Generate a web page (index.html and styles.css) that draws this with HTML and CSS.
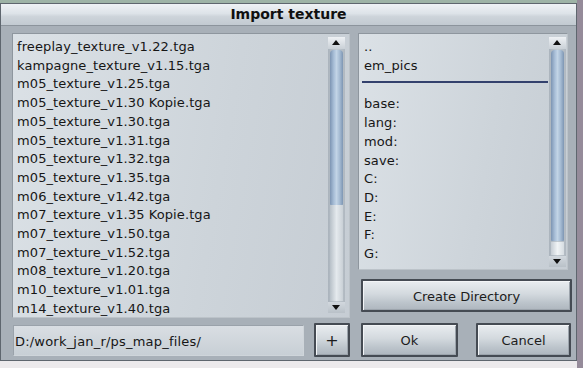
FILE: index.html
```html
<!DOCTYPE html>
<html>
<head>
<meta charset="utf-8">
<title>Import texture</title>
<link rel="stylesheet" href="styles.css">
</head>
<body>
<div class="dialog">
  <div class="titlebar">Import texture</div>
  <div class="content">
    <div class="panel files-panel">
      <ul class="list files">
        <li>freeplay_texture_v1.22.tga</li>
        <li>kampagne_texture_v1.15.tga</li>
        <li>m05_texture_v1.25.tga</li>
        <li>m05_texture_v1.30 Kopie.tga</li>
        <li>m05_texture_v1.30.tga</li>
        <li>m05_texture_v1.31.tga</li>
        <li>m05_texture_v1.32.tga</li>
        <li>m05_texture_v1.35.tga</li>
        <li>m06_texture_v1.42.tga</li>
        <li>m07_texture_v1.35 Kopie.tga</li>
        <li>m07_texture_v1.50.tga</li>
        <li>m07_texture_v1.52.tga</li>
        <li>m08_texture_v1.20.tga</li>
        <li>m10_texture_v1.01.tga</li>
        <li>m14_texture_v1.40.tga</li>
      </ul>
      <div class="scrollbar">
        <div class="arrow up"></div>
        <div class="track">
          <div class="thumb thumb-files"></div>
          <div class="rest"></div>
        </div>
        <div class="arrow down"></div>
      </div>
    </div>

    <div class="right-col">
      <div class="panel dirs-panel">
        <div class="list dirs">
          <div class="item">..</div>
          <div class="item">em_pics</div>
          <div class="separator"></div>
          <div class="item">base:</div>
          <div class="item">lang:</div>
          <div class="item">mod:</div>
          <div class="item">save:</div>
          <div class="item">C:</div>
          <div class="item">D:</div>
          <div class="item">E:</div>
          <div class="item">F:</div>
          <div class="item">G:</div>
        </div>
        <div class="scrollbar dirs-scroll">
          <div class="arrow up"></div>
          <div class="track">
            <div class="thumb thumb-dirs"></div>
            <div class="knob"></div>
          </div>
          <div class="arrow down"></div>
        </div>
      </div>
      <button class="btn create">Create Directory</button>
    </div>

    <div class="path-row">
      <div class="path-input">D:/work_jan_r/ps_map_files/</div>
      <button class="btn plus">+</button>
    </div>

    <div class="action-row">
      <button class="btn ok">Ok</button>
      <button class="btn cancel">Cancel</button>
    </div>
  </div>
</div>
</body>
</html>
```

FILE: styles.css
```css
html, body {
  margin: 0;
  padding: 0;
}

body {
  width: 583px;
  height: 368px;
  overflow: hidden;
  background:
    linear-gradient(to right, transparent 577px, #958b9a 577px),
    linear-gradient(#9db3a6 0 3px, #eceaec 3px);
  font-family: "DejaVu Sans", Verdana, sans-serif;
  color: #161616;
}

.dialog {
  box-sizing: border-box;
  margin-top: 3px;
  width: 577px;
  height: 358px;
  border: 1px solid #5e666e;
  background: #a8b0b8;
}

.titlebar {
  box-sizing: border-box;
  height: 22px;
  line-height: 21px;
  text-align: center;
  font-weight: bold;
  font-size: 14px;
  color: #101010;
  background: linear-gradient(#eef2f5, #dde3e8 45%, #cdd4da 60%, #c2cad1);
  border-bottom: 1px solid #8c949c;
}

.content {
  display: grid;
  grid-template-columns: 338px 214px;
  grid-template-rows: 285px 34px;
  column-gap: 8px;
  row-gap: 5px;
  padding: 7px 0 0 11px;
}

.panel {
  box-sizing: border-box;
  display: flex;
  border: 1px solid #8e969e;
  border-right-color: #bcc3c9;
  border-bottom-color: #bcc3c9;
  background: linear-gradient(100deg, #dbe1e6, #cdd4da 60%, #c6cdd4);
  overflow: hidden;
}

.list {
  flex: 1;
  margin: 0;
  list-style: none;
  font-size: 13px;
  letter-spacing: 0.1px;
  line-height: 18.7px;
  overflow: hidden;
  white-space: nowrap;
}

.files {
  padding: 4px 0 0 4px;
}

.dirs {
  padding: 4px 1px 0 5px;
}

.separator {
  height: 2px;
  margin: 6px 0 12px -2px;
  background: #33416d;
}

/* scrollbars */
.scrollbar {
  width: 17px;
  margin: 3px 4px 4px 0;
  display: flex;
  flex-direction: column;
  background: #b3bbc3;
}

.dirs-scroll {
  margin: 3px 1px 2px 0;
}

.arrow {
  height: 12px;
  position: relative;
  background: linear-gradient(#eef1f4, #c9d0d6);
}

.arrow.down {
  height: 11px;
  background: linear-gradient(#d2d8de, #b9c1c8);
}

.arrow::after {
  content: "";
  position: absolute;
  left: 4px;
  border-left: 4px solid transparent;
  border-right: 4px solid transparent;
}

.arrow.up::after {
  top: 3px;
  border-bottom: 5px solid #111;
}

.arrow.down::after {
  top: 3px;
  border-top: 5px solid #111;
}

.track {
  flex: 1;
  display: flex;
  flex-direction: column;
  padding: 1px 2px;
  background: linear-gradient(to right, #aab3bc, #c2cad1 50%, #b0b8c0);
}

.thumb {
  border-radius: 4px 4px 1px 1px;
  background: linear-gradient(to right, #7d95b3, #a9bfd8 30%, #c2d4e6 50%, #a4bad2 75%, #7e96b3);
}

.thumb-files {
  height: 155px;
}

.thumb-dirs {
  flex: 1;
}

.rest {
  flex: 1;
  background: linear-gradient(to right, #b7c0c8, #e4e9ed 50%, #c9d0d6);
}

.knob {
  height: 13px;
  margin-top: 1px;
  background: linear-gradient(to right, #c6cdd4, #f1f4f6 50%, #d6dce1);
}

/* right column */
.right-col {
  display: flex;
  flex-direction: column;
}

.dirs-panel {
  width: 210px;
  height: 237px;
}

/* buttons */
.btn {
  box-sizing: border-box;
  padding: 0;
  font-family: "DejaVu Sans", Verdana, sans-serif;
  font-size: 13px;
  color: #1c1c1c;
  border: 2px solid #454b53;
  border-radius: 1px;
  background: linear-gradient(#e9edf0, #d3d9de 45%, #bcc4cb 75%, #aeb6be);
  box-shadow: inset 1px 1px 0 #f3f5f7, inset -1px -1px 0 #9ca4ac;
}

.create {
  margin: 9px 0 0 3px;
  width: 211px;
  height: 33px;
  padding-top: 1px;
}

/* bottom rows */
.path-row {
  display: flex;
  gap: 10px;
}

.path-input {
  box-sizing: border-box;
  width: 291px;
  height: 31px;
  margin: 2px 0 0 1px;
  padding: 8px 0 0 1px;
  font-size: 13px;
  letter-spacing: 0.2px;
  white-space: nowrap;
  background: linear-gradient(#d9dee3, #c8cfd5);
  border: 1px solid #9aa2aa;
  border-right-color: #cfd5da;
  border-bottom-color: #cfd5da;
}

.plus {
  width: 36px;
  height: 34px;
  font-size: 16px;
}

.action-row {
  display: flex;
  gap: 18px;
  padding-left: 3px;
}

.ok {
  width: 97px;
  height: 34px;
}

.cancel {
  width: 95px;
  height: 34px;
}
```
